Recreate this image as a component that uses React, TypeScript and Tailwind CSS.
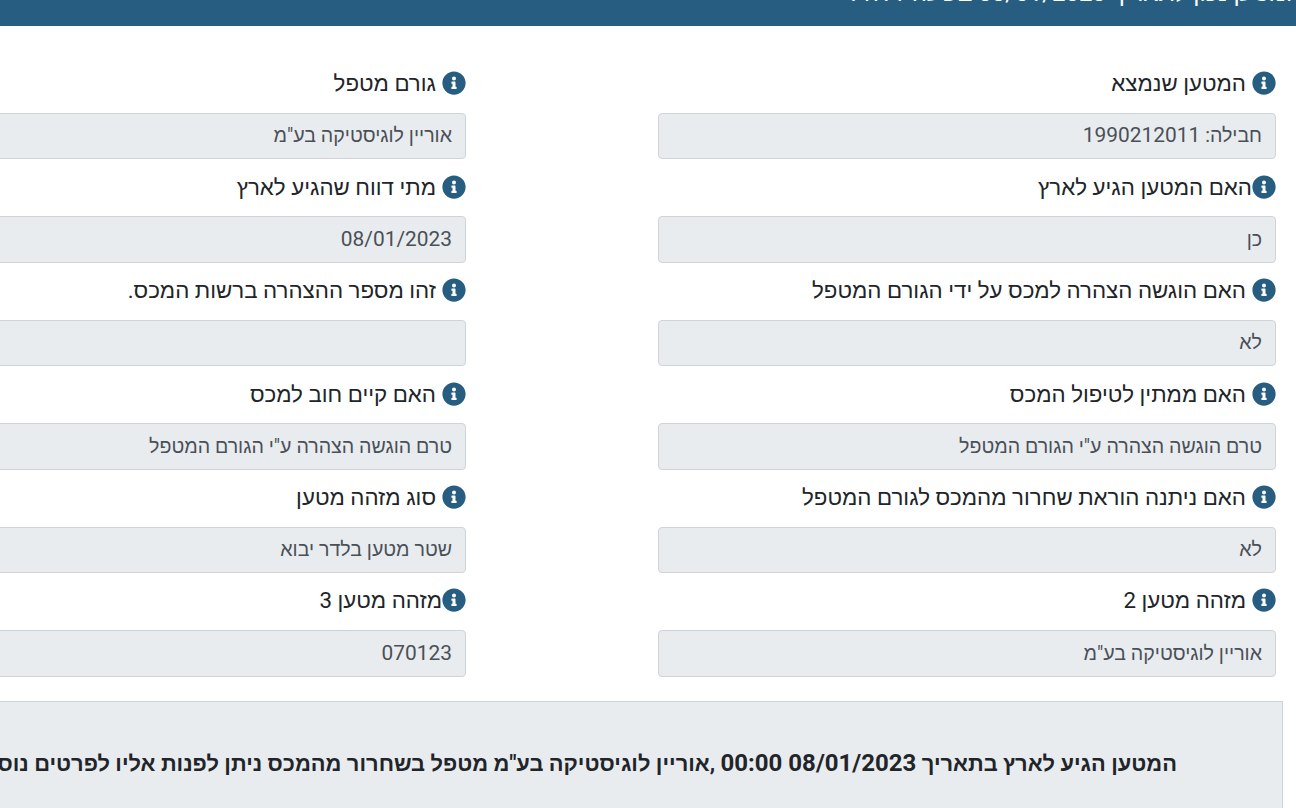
const LABEL_COLOR = "text-[#212529]";

function InfoIcon() {
  return (
    <svg viewBox="0 0 512 512" className="w-6 h-6 shrink-0 fill-[#275d80]" aria-hidden="true">
      <path d="M256 8C119 8 8 119 8 256s111 248 248 248 248-111 248-248S393 8 256 8zm0 110c23.2 0 42 18.8 42 42s-18.8 42-42 42-42-18.8-42-42 18.8-42 42-42zm56 254c0 6.6-5.4 12-12 12h-88c-6.6 0-12-5.4-12-12v-24c0-6.6 5.4-12 12-12h12v-64h-12c-6.6 0-12-5.4-12-12v-24c0-6.6 5.4-12 12-12h64c6.6 0 12 5.4 12 12v100h12c6.6 0 12 5.4 12 12v24z" />
    </svg>
  );
}

type Field = { label: string; value?: string; digits?: string; tight?: boolean };

const rows: [Field, Field][] = [
  [
    { label: "המטען שנמצא", value: "חבילה: ", digits: "1990212011" },
    { label: "גורם מטפל", value: 'אוריין לוגיסטיקה בע"מ' },
  ],
  [
    { label: "האם המטען הגיע לארץ", value: "כן", tight: true },
    { label: "מתי דווח שהגיע לארץ", digits: "08/01/2023" },
  ],
  [
    { label: "האם הוגשה הצהרה למכס על ידי הגורם המטפל", value: "לא" },
    { label: "זהו מספר ההצהרה ברשות המכס." },
  ],
  [
    { label: "האם ממתין לטיפול המכס", value: 'טרם הוגשה הצהרה ע"י הגורם המטפל' },
    { label: "האם קיים חוב למכס", value: 'טרם הוגשה הצהרה ע"י הגורם המטפל' },
  ],
  [
    { label: "האם ניתנה הוראת שחרור מהמכס לגורם המטפל", value: "לא" },
    { label: "סוג מזהה מטען", value: "שטר מטען בלדר יבוא" },
  ],
  [
    { label: "מזהה מטען 2", value: 'אוריין לוגיסטיקה בע"מ' },
    { label: "מזהה מטען 3", digits: "070123", tight: true },
  ],
];

function FieldBox({ field }: { field: Field }) {
  return (
    <div className="w-[618px] shrink-0">
      <div className={`flex items-center h-[24px] ${field.tight ? "gap-0" : "gap-[6px]"}`}>
        <InfoIcon />
        <label className={`text-[22.3px] leading-[24px] whitespace-nowrap ${LABEL_COLOR}`}>{field.label}</label>
      </div>
      <div className="mt-[17.85px] h-[46.5px] rounded-[4px] border border-[#ced4da] bg-[#e9ecef] px-[13px] flex items-center text-[#495057] text-[19.6px] whitespace-pre">
        {field.value}
        {field.digits && <span className="text-[20.9px]">{field.digits}</span>}
      </div>
    </div>
  );
}

export default function App() {
  return (
    <div
      dir="rtl"
      className="w-[1296px] h-[808px] overflow-hidden bg-white font-['Roboto','Liberation_Sans',sans-serif]"
    >
      <div className="h-[26px] bg-[#275d80] overflow-hidden flex items-end">
        <p className="-mr-[55px] mb-[18px] text-white text-[24px] leading-[30px] whitespace-nowrap">
          מצב המטען נכון לתאריך 08/01/2023 בשעה 11:11
        </p>
      </div>
      <div className="pt-[45.05px] pr-[20px] flex flex-col gap-[15.15px]">
        {rows.map((row, i) => (
          <div key={i} className="flex gap-[192px]">
            <FieldBox field={row[0]} />
            <FieldBox field={row[1]} />
          </div>
        ))}
      </div>
      <div className="mt-[24px] mr-[13px] w-[1500px] h-[120px] border border-[#ced4da] bg-[#e9ecef] pt-[46px] pr-[105px]">
        <p className="text-[#212529] text-[21.85px] font-bold leading-[30px] whitespace-nowrap">
          המטען הגיע לארץ בתאריך <span className="text-[24px]">08/01/2023 00:00</span> ,אוריין לוגיסטיקה בע"מ מטפל בשחרור מהמכס ניתן לפנות אליו לפרטים נוספים
        </p>
      </div>
    </div>
  );
}
